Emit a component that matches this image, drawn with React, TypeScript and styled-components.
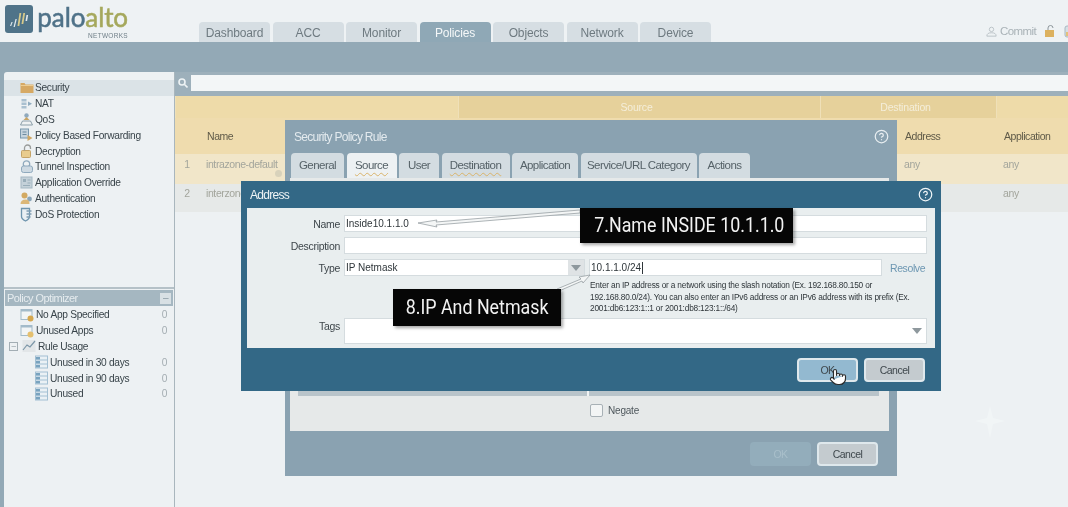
import styled, { createGlobalStyle } from "styled-components";
import { CircleHelp, Pointer } from "lucide-react";

const GlobalStyle = createGlobalStyle`
  html, body {
    margin: 0;
    padding: 0;
    background: #edf1f3;
  }
  body {
    font-family: "Liberation Sans", Arial, sans-serif;
    overflow: hidden;
  }
`;

const Page = styled.div`
  position: relative;
  width: 1068px;
  height: 507px;
  overflow: hidden;
  background: #edf1f3;
  filter: blur(0.35px);
`;

const Header = styled.header`
  display: flex;
  height: 42px;
  background: #eef2f4;
`;

const Logo = styled.div`
  display: flex;
  flex: none;
  gap: 5px;
  width: 199px;
  padding: 5px 0 0 5px;
  box-sizing: border-box;
`;

const LogoWords = styled.div`
  display: flex;
  flex-direction: column;
  align-items: flex-end;
  flex: none;
  width: 90px;
  margin-top: -2px;
`;

const LogoName = styled.div`
  font-family: "Lato", sans-serif;
  font-size: 26px;
  line-height: 29px;
  letter-spacing: -0.1px;
  color: #4f7288;
  -webkit-text-stroke: 0.5px #4f7288;
  span {
    color: #a5a85c;
    -webkit-text-stroke: 0.5px #a5a85c;
  }
`;

const LogoSub = styled.div`
  font-size: 6.5px;
  letter-spacing: 0.3px;
  color: #6f7f88;
`;

const Tabs = styled.nav`
  display: flex;
  gap: 2.5px;
  align-self: flex-end;
`;

const Tab = styled.div<{ $active?: boolean }>`
  width: 71px;
  height: 20px;
  border-radius: 4px 4px 0 0;
  background: ${(p) => (p.$active ? "#8fa8b6" : "#d6dee3")};
  color: ${(p) => (p.$active ? "#f4f7f8" : "#6e7a80")};
  font-size: 12px;
  letter-spacing: -0.15px;
  line-height: 23px;
  text-align: center;
`;

const Tools = styled.div`
  display: flex;
  align-items: center;
  gap: 8px;
  margin: 20px 0 0 auto;
  height: 22px;
  color: #a9b2b7;
  font-size: 11.5px;
  letter-spacing: -0.6px;
  width: 82px;
  flex: none;
  svg {
    flex: none;
  }
`;

const Commit = styled.span`
  display: flex;
  align-items: center;
  gap: 3px;
`;

const Band = styled.div`
  height: 30px;
  background: #93a9b6;
`;

const Body = styled.div`
  display: flex;
  height: 435px;
  padding-left: 4px;
  background: #93a9b6;
`;

const Sidebar = styled.aside`
  display: flex;
  flex-direction: column;
  flex: none;
  width: 171px;
  box-sizing: border-box;
  padding-top: 8px;
  background: #edf1f3;
  border-right: 1px solid #a9b6bd;
  border-radius: 3px 0 0 0;
`;

const NavList = styled.div`
  height: 207px;
  border-bottom: 2px solid #b5c1c7;
`;

const NavRow = styled.div<{ $selected?: boolean }>`
  display: flex;
  align-items: center;
  gap: 1px;
  height: 15.8px;
  padding-left: 15px;
  background: ${(p) => (p.$selected ? "#dbe3e7" : "transparent")};
  color: #39444a;
  font-size: 10.2px;
  letter-spacing: -0.3px;
`;

const OptimizerHead = styled.div`
  display: flex;
  align-items: center;
  justify-content: space-between;
  height: 16px;
  margin: 1px;
  padding: 0 2px;
  background: #a5b7c1;
  color: #e6ecef;
  font-size: 11px;
  letter-spacing: -0.55px;
`;

const Collapse = styled.span`
  width: 11px;
  height: 11px;
  background: #d8e0e4;
  color: #8b9aa3;
  font-size: 10px;
  line-height: 10px;
  text-align: center;
`;

const TreeRow = styled.div<{ $indent: number }>`
  display: flex;
  align-items: center;
  gap: 2px;
  height: 15.8px;
  padding: 0 7px 0 ${(p) => p.$indent}px;
  color: #39444a;
  font-size: 10.2px;
  letter-spacing: -0.3px;
`;

const Count = styled.span`
  margin-left: auto;
  color: #a4adb2;
`;

const TreeToggle = styled.span`
  width: 7px;
  height: 7px;
  margin-right: 2px;
  border: 1px solid #a3aeb4;
  color: #7d8a91;
  font-size: 8px;
  line-height: 6px;
  text-align: center;
`;

const Main = styled.main`
  flex: 1;
  display: flex;
  flex-direction: column;
  min-width: 0;
  background: #edf1f3;
`;

const SearchRow = styled.div`
  display: flex;
  height: 24px;
  box-sizing: border-box;
  padding-top: 3px;
  background: #9db0bb;
`;

const SearchIcon = styled.div`
  width: 16px;
  height: 16px;
  display: flex;
  align-items: center;
  justify-content: center;
`;

const SearchInput = styled.div`
  flex: 1;
  height: 16px;
  background: #f3f6f7;
`;

const GroupRow = styled.div`
  display: grid;
  grid-template-columns: 283px 362px 176px 1fr;
  height: 22px;
  background: #eedba9;
`;

const GroupCell = styled.div<{ $dark?: boolean }>`
  background: ${(p) => (p.$dark ? "#e6d19b" : "transparent")};
  border-left: 1px solid #efe0b8;
  padding-right: 6px;
  color: #f4eeda;
  font-size: 10.5px;
  letter-spacing: -0.2px;
  line-height: 22px;
  text-align: center;
`;

const TableRow = styled.div<{ $bg: string; $height: number }>`
  display: grid;
  grid-template-columns: 24px 96px 602px 99px 1fr;
  height: ${(p) => p.$height}px;
  align-items: center;
  background: ${(p) => p.$bg};
`;

const HeadCell = styled.div`
  padding-left: 8px;
  color: #5f5a48;
  font-size: 10.5px;
  letter-spacing: -0.45px;
`;

const DataCell = styled.div<{ $center?: boolean }>`
  position: relative;
  padding-left: ${(p) => (p.$center ? 0 : 7)}px;
  margin-top: -10px;
  color: #a3a59c;
  font-size: 10.5px;
  letter-spacing: -0.4px;
  text-align: ${(p) => (p.$center ? "center" : "left")};
  white-space: nowrap;
`;

const ClippedName = styled(DataCell)`
  width: 35px;
  overflow: hidden;
`;

const RowBadge = styled.span`
  position: absolute;
  left: 76px;
  top: 12px;
  width: 7px;
  height: 7px;
  border-radius: 50%;
  background: #d8d2bb;
`;

const Window = styled.section<{ $x: number; $y: number; $w: number; $h: number; $bg: string }>`
  position: absolute;
  left: ${(p) => p.$x}px;
  top: ${(p) => p.$y}px;
  width: ${(p) => p.$w}px;
  height: ${(p) => p.$h}px;
  display: flex;
  flex-direction: column;
  background: ${(p) => p.$bg};
`;

const WindowTitle = styled.div<{ $height: number; $color: string }>`
  display: flex;
  align-items: center;
  justify-content: space-between;
  flex: none;
  height: ${(p) => p.$height}px;
  padding: 0 8px 0 9px;
  color: ${(p) => p.$color};
  font-size: 12px;
  letter-spacing: -0.7px;
`;

const RuleTabs = styled.div`
  display: flex;
  gap: 2.5px;
  height: 25px;
  padding-left: 6px;
  flex: none;
`;

const RuleTab = styled.div<{ $w: number; $active?: boolean; $wavy?: boolean }>`
  width: ${(p) => p.$w}px;
  border-radius: 4px 4px 0 0;
  background: ${(p) => (p.$active ? "#edf1f3" : "#d3dce1")};
  color: #566268;
  font-size: 11.5px;
  letter-spacing: -0.55px;
  line-height: 25px;
  text-align: center;
  text-decoration: ${(p) => (p.$wavy ? "underline wavy #d9b36a 1px" : "none")};
  text-underline-offset: 3px;
`;

const RulePanel = styled.div`
  flex: 1;
  display: flex;
  flex-direction: column;
  justify-content: flex-end;
  margin: 0 8px 0 5px;
  padding: 0 10px 0 8px;
  background: #e6e9e9;
`;

const RuleTableEnd = styled.div`
  display: grid;
  grid-template-columns: 289px 1fr;
  gap: 2px;
  height: 6px;
  background: #f1f3f3;
  div {
    background: #b9c4ca;
  }
`;

const NegateRow = styled.label`
  display: flex;
  align-items: center;
  gap: 5px;
  height: 35px;
  box-sizing: border-box;
  padding: 0 0 6px 292px;
  color: #4e575c;
  font-size: 10px;
  letter-spacing: -0.2px;
`;

const CheckBox = styled.span`
  width: 11px;
  height: 11px;
  border: 1px solid #a8b1b6;
  border-radius: 2px;
  background: #f3f5f5;
`;

const WindowFooter = styled.div<{ $height: number; $right: number }>`
  display: flex;
  align-items: center;
  justify-content: flex-end;
  gap: 6px;
  flex: none;
  height: ${(p) => p.$height}px;
  padding-right: ${(p) => p.$right}px;
`;

const Button = styled.div<{ $kind: "ok" | "cancel" | "muted" }>`
  width: 61px;
  height: 24px;
  box-sizing: border-box;
  border: 2px solid ${(p) => (p.$kind === "muted" ? "#93adbb" : "#dfe8ec")};
  border-radius: 4px;
  background: ${(p) =>
    p.$kind === "ok" ? "#93b9d0" : p.$kind === "muted" ? "#93adbb" : "#c4cbcf"};
  color: ${(p) => (p.$kind === "muted" ? "#a9bfca" : "#3f484d")};
  font-size: 10.5px;
  letter-spacing: -0.5px;
  line-height: 20px;
  text-align: center;
`;

const AddressPanel = styled.div`
  display: grid;
  grid-template-columns: 93px 1fr;
  column-gap: 4px;
  row-gap: 5px;
  align-content: start;
  align-items: center;
  flex: none;
  height: 140px;
  box-sizing: border-box;
  margin: 0 6px;
  padding: 7px 8px 0 0;
  background: #e9eeef;
`;

const Label = styled.div`
  color: #3e464b;
  font-size: 10.5px;
  letter-spacing: -0.3px;
  text-align: right;
`;

const TagsLabel = styled(Label)`
  margin-top: -10px;
`;

const Input = styled.div<{ $height?: number }>`
  display: flex;
  align-items: center;
  height: ${(p) => p.$height ?? 17}px;
  box-sizing: border-box;
  padding-left: 1px;
  border: 1px solid #d5dcdf;
  background: #fff;
  color: #2f363a;
  font-size: 10px;
`;

const TypeRow = styled.div`
  display: grid;
  grid-template-columns: 241px 293px 1fr;
  column-gap: 4px;
  align-items: center;
`;

const Arrow = styled.span`
  margin-left: auto;
  width: 0;
  height: 0;
  border-left: 5px solid transparent;
  border-right: 5px solid transparent;
  border-top: 6px solid #8e989d;
`;

const TypeArrowCell = styled.span`
  display: flex;
  align-items: center;
  justify-content: center;
  align-self: stretch;
  width: 16px;
  margin-left: auto;
  background: #dfe3e5;
`;

const TypeArrow = styled(Arrow)`
  margin: 0;
`;

const TagsArrow = styled(Arrow)`
  margin-right: 4px;
`;

const Caret = styled.span`
  width: 1px;
  height: 12px;
  margin-left: 1px;
  background: #2f363a;
`;

const Resolve = styled.span`
  margin-left: 4px;
  color: #6d97b2;
  font-size: 10.5px;
  letter-spacing: -0.4px;
`;

const HelpText = styled.div`
  grid-column: 2;
  margin: -1px 0 -2px 246px;
  color: #2f363a;
  font-size: 8.3px;
  letter-spacing: -0.19px;
  line-height: 11.7px;
  height: 35px;
  white-space: nowrap;
`;

const Callout = styled.div<{ $x: number; $y: number; $w: number; $h: number }>`
  position: absolute;
  left: ${(p) => p.$x}px;
  top: ${(p) => p.$y}px;
  width: ${(p) => p.$w}px;
  height: ${(p) => p.$h}px;
  background: #060606;
  box-shadow: 2px 2px 3px rgba(0, 0, 0, 0.35);
  color: #f2f2f2;
  font-family: "Roboto", sans-serif;
  font-size: 20.5px;
  line-height: ${(p) => p.$h}px;
  text-align: center;
  white-space: nowrap;
`;

const CalloutText = styled.span`
  display: inline-block;
  transform: scaleX(0.87);
`;

const Overlay = styled.svg`
  position: absolute;
  left: 0;
  top: 0;
  pointer-events: none;
`;

const HandCursor = styled.div`
  position: absolute;
  left: 829px;
  top: 368px;
  width: 18px;
  height: 20px;
  color: #2b2b2b;
`;

const navItems = [
  { label: "Security", icon: "folder" },
  { label: "NAT", icon: "nat" },
  { label: "QoS", icon: "qos" },
  { label: "Policy Based Forwarding", icon: "pbf" },
  { label: "Decryption", icon: "lock" },
  { label: "Tunnel Inspection", icon: "tunnel" },
  { label: "Application Override", icon: "app" },
  { label: "Authentication", icon: "auth" },
  { label: "DoS Protection", icon: "dos" },
];

function NavIcon({ kind }: { kind: string }) {
  const parts: Record<string, React.ReactNode> = {
    folder: (
      <>
        <path d="M1 3h4l1 1.5h8V13H1z" fill="#d6a964" />
        <path d="M1 5.5h13" stroke="#eccd94" />
      </>
    ),
    nat: (
      <>
        <rect x="2" y="3" width="5" height="2.5" fill="#a9c0d0" />
        <rect x="2" y="6.5" width="5" height="2.5" fill="#a9c0d0" />
        <rect x="2" y="10" width="5" height="2.5" fill="#a9c0d0" />
        <path d="M8.5 5.5l4 2.3-4 2.3z" fill="#8fabbf" />
      </>
    ),
    qos: (
      <>
        <circle cx="7" cy="3.5" r="2.2" fill="#8fa9bd" />
        <path d="M4 8l3-3 3 3z" fill="#c9a463" />
        <path d="M1 13l2-4h8l2 4z" fill="#eef1f2" stroke="#8b9ea9" />
      </>
    ),
    pbf: (
      <>
        <rect x="1" y="1" width="8" height="9" fill="#c6d4de" stroke="#7b99ae" />
        <path d="M3 4h4M3 6.5h4" stroke="#6d8ba0" />
        <path d="M8 7l5 3-5 3z" fill="#cfa765" />
      </>
    ),
    lock: (
      <>
        <rect x="2" y="6.5" width="9" height="7" rx="1" fill="#e9cc8d" stroke="#c5a468" />
        <path d="M5 6.5V4a3 3 0 0 1 6 0v1" fill="none" stroke="#9a9d9b" strokeWidth="1.3" />
      </>
    ),
    tunnel: (
      <>
        <circle cx="7" cy="5" r="3.2" fill="none" stroke="#8fa9bd" strokeWidth="1.3" />
        <rect x="2" y="7" width="11" height="6.5" rx="2" fill="#cdd9e2" stroke="#8fa9bd" />
      </>
    ),
    app: (
      <>
        <rect x="1.5" y="2" width="11" height="11" fill="#c4d1d9" stroke="#a5b8c3" />
        <rect x="3.5" y="4" width="3" height="3" fill="#98adb9" />
        <path d="M8 5h3M8 8h3M3.5 10.5h7" stroke="#98adb9" />
      </>
    ),
    auth: (
      <>
        <circle cx="5" cy="4.5" r="3" fill="#d3aa62" />
        <circle cx="10" cy="8" r="2.4" fill="#8ba7bb" />
        <path d="M1 13c0-3 2-4.5 5-4.5s4 1.5 4 4.5z" fill="#dbb778" />
      </>
    ),
    dos: (
      <>
        <path d="M2 1.5h8v8c0 2-2 3.5-4 4.5-2-1-4-2.5-4-4.5z" fill="#e9eff3" stroke="#6f95ae" strokeWidth="1.3" />
        <path d="M7 4h5M7 7h5M7 10h4" stroke="#7f9db3" strokeWidth="1.4" />
      </>
    ),
  };
  return (
    <svg width="15" height="15" viewBox="0 0 14 15">
      {parts[kind]}
    </svg>
  );
}

function WindowIcon({ dot }: { dot: string }) {
  return (
    <svg width="14" height="14" viewBox="0 0 14 14">
      <rect x="1" y="1.5" width="11" height="10" fill="#f2f5f6" stroke="#a3bbca" />
      <rect x="1" y="1.5" width="11" height="2" fill="#a3bbca" />
      <circle cx="10.5" cy="10.5" r="3" fill={dot} />
    </svg>
  );
}

function RuleIcon() {
  return (
    <svg width="13" height="14" viewBox="0 0 13 14">
      <rect x="0.5" y="1" width="12" height="12" fill="#eaf1f5" stroke="#a3c0d3" />
      <path d="M0.5 5h12M0.5 9h12" stroke="#a3c0d3" />
      <rect x="1" y="2" width="4" height="2.5" fill="#79a3bf" />
      <rect x="1" y="6" width="4" height="2.5" fill="#79a3bf" />
      <rect x="1" y="10" width="4" height="2.5" fill="#79a3bf" />
    </svg>
  );
}

function App() {
  return (
    <Page>
      <GlobalStyle />
      <Header>
        <Logo>
          <svg width="28" height="28" viewBox="0 0 28 28">
            <rect width="28" height="28" rx="3" fill="#4f7389" />
            <path d="M5 21l1.5-4h1.200L6.200 21zM8.500 22l2-8h1.300l-2 8z" fill="#dfe8ec" />
            <path d="M12.500 21l2-13h1.800l-2 13zM16.500 19l1.800-11h1.800l-1.800 11z" fill="#d6c98a" />
            <path d="M20.500 16l1-6h1.600l-1 6z" fill="#e6ebee" />
          </svg>
          <LogoWords>
            <LogoName>
              palo<span>alto</span>
            </LogoName>
            <LogoSub>NETWORKS</LogoSub>
          </LogoWords>
        </Logo>
        <Tabs>
          <Tab>Dashboard</Tab>
          <Tab>ACC</Tab>
          <Tab>Monitor</Tab>
          <Tab $active>Policies</Tab>
          <Tab>Objects</Tab>
          <Tab>Network</Tab>
          <Tab>Device</Tab>
        </Tabs>
        <Tools>
          <Commit>
            <svg width="11" height="13" viewBox="0 0 13 13" fill="none" stroke="#b4bcc1">
              <circle cx="6.5" cy="4" r="2.6" />
              <path d="M1 12c0-3 2-4 5.5-4s5.500 1 5.500 4z" />
            </svg>
            Commit
          </Commit>
          <svg width="12" height="13" viewBox="0 0 12 13">
            <rect x="1" y="5" width="9" height="7" fill="#dcb15f" />
            <path d="M4 5V3a2.5 2.5 0 0 1 5 0" fill="none" stroke="#8d969b" />
          </svg>
          <svg width="12" height="13" viewBox="0 0 12 13">
            <rect x="1" y="1" width="10" height="11" rx="2" fill="#d6e0e6" stroke="#a8b8c2" />
            <rect x="2" y="7" width="8" height="4" fill="#e2c27c" />
          </svg>
        </Tools>
      </Header>
      <Band />
      <Body>
        <Sidebar>
          <NavList>
            {navItems.map((item, i) => (
              <NavRow key={item.label} $selected={i === 0}>
                <NavIcon kind={item.icon} />
                {item.label}
              </NavRow>
            ))}
          </NavList>
          <OptimizerHead>
            Policy Optimizer
            <Collapse>–</Collapse>
          </OptimizerHead>
          <TreeRow $indent={16}>
            <WindowIcon dot="#d6a84f" />
            No App Specified
            <Count>0</Count>
          </TreeRow>
          <TreeRow $indent={16}>
            <WindowIcon dot="#e5c06f" />
            Unused Apps
            <Count>0</Count>
          </TreeRow>
          <TreeRow $indent={5}>
            <TreeToggle>–</TreeToggle>
            <svg width="14" height="14" viewBox="0 0 14 14">
              <rect x="0.5" y="1" width="13" height="12" fill="#e2e6e8" />
              <path d="M1 11l4-5 3 2 5-6" fill="none" stroke="#7c97a8" strokeWidth="1.2" />
            </svg>
            Rule Usage
          </TreeRow>
          <TreeRow $indent={31}>
            <RuleIcon />
            Unused in 30 days
            <Count>0</Count>
          </TreeRow>
          <TreeRow $indent={31}>
            <RuleIcon />
            Unused in 90 days
            <Count>0</Count>
          </TreeRow>
          <TreeRow $indent={31}>
            <RuleIcon />
            Unused
            <Count>0</Count>
          </TreeRow>
        </Sidebar>
        <Main>
          <SearchRow>
            <SearchIcon>
              <svg width="10" height="10" viewBox="0 0 10 10" fill="none" stroke="#eef3f5" strokeWidth="1.6">
                <circle cx="4" cy="4" r="3" />
                <path d="M6.5 6.5L9.5 9.5" />
              </svg>
            </SearchIcon>
            <SearchInput />
          </SearchRow>
          <GroupRow>
            <GroupCell />
            <GroupCell $dark>Source</GroupCell>
            <GroupCell $dark>Destination</GroupCell>
            <GroupCell />
          </GroupRow>
          <TableRow $bg="#efdcae" $height={36}>
            <HeadCell />
            <HeadCell>Name</HeadCell>
            <HeadCell />
            <HeadCell>Address</HeadCell>
            <HeadCell>Application</HeadCell>
          </TableRow>
          <TableRow $bg="#f1e6c9" $height={30}>
            <DataCell $center>1</DataCell>
            <DataCell>
              intrazone-default
              <RowBadge />
            </DataCell>
            <DataCell />
            <DataCell>any</DataCell>
            <DataCell>any</DataCell>
          </TableRow>
          <TableRow $bg="#e6e9e8" $height={28}>
            <DataCell $center>2</DataCell>
            <ClippedName>interzone-default</ClippedName>
            <DataCell />
            <DataCell>any</DataCell>
            <DataCell>any</DataCell>
          </TableRow>
        </Main>
      </Body>

      <Window $x={285} $y={120} $w={612} $h={356} $bg="#8aa2b1">
        <WindowTitle $height={33} $color="#e3eaee">
          Security Policy Rule
          <CircleHelp size={15} color="#e8eef1" />
        </WindowTitle>
        <RuleTabs>
          <RuleTab $w={53}>General</RuleTab>
          <RuleTab $w={50} $active $wavy>Source</RuleTab>
          <RuleTab $w={40}>User</RuleTab>
          <RuleTab $w={68} $wavy>Destination</RuleTab>
          <RuleTab $w={66}>Application</RuleTab>
          <RuleTab $w={116}>Service/URL Category</RuleTab>
          <RuleTab $w={51}>Actions</RuleTab>
        </RuleTabs>
        <RulePanel>
          <RuleTableEnd>
            <div />
            <div />
          </RuleTableEnd>
          <NegateRow>
            <CheckBox />
            Negate
          </NegateRow>
        </RulePanel>
        <WindowFooter $height={45} $right={19}>
          <Button $kind="muted">OK</Button>
          <Button $kind="cancel">Cancel</Button>
        </WindowFooter>
      </Window>

      <Window $x={241} $y={181} $w={700} $h={210} $bg="#336886">
        <WindowTitle $height={27} $color="#eef3f5">
          Address
          <CircleHelp size={15} color="#f0f5f7" />
        </WindowTitle>
        <AddressPanel>
          <Label>Name</Label>
          <Input>Inside10.1.1.0</Input>
          <Label>Description</Label>
          <Input />
          <Label>Type</Label>
          <TypeRow>
            <Input>
              IP Netmask
              <TypeArrowCell>
                <TypeArrow />
              </TypeArrowCell>
            </Input>
            <Input>
              10.1.1.0/24
              <Caret />
            </Input>
            <Resolve>Resolve</Resolve>
          </TypeRow>
          <HelpText>
            Enter an IP address or a network using the slash notation (Ex. 192.168.80.150 or
            <br />
            192.168.80.0/24). You can also enter an IPv6 address or an IPv6 address with its prefix (Ex.
            <br />
            2001:db6:123:1::1 or 2001:db8:123:1::/64)
          </HelpText>
          <TagsLabel>Tags</TagsLabel>
          <Input $height={26}>
            <TagsArrow />
          </Input>
        </AddressPanel>
        <WindowFooter $height={43} $right={16}>
          <Button $kind="ok">OK</Button>
          <Button $kind="cancel">Cancel</Button>
        </WindowFooter>
      </Window>

      <Overlay width="1068" height="507" viewBox="0 0 1068 507">
        <path d="M580 210L436 222L437 220L418 223L437 227L436 225L580 213z" fill="#f4f6f6" stroke="#8d9599" strokeWidth="0.7" />
        <path d="M557 289L581 279L579 277L590 275L583 283L582 281L559 291z" fill="#f4f6f6" stroke="#8d9599" strokeWidth="0.7" />
        <path d="M990 406l3 12 12 3-12 3-3 14-3-14-12-3 12-3z" fill="#f1f5f6" />
      </Overlay>
      <Callout $x={580} $y={208} $w={213} $h={35}>
        <CalloutText>7.Name INSIDE 10.1.1.0</CalloutText>
      </Callout>
      <Callout $x={393} $y={289} $w={168} $h={37}>
        <CalloutText>8.IP And Netmask</CalloutText>
      </Callout>
      <HandCursor>
        <Pointer size={18} fill="#fff" strokeWidth={1.5} />
      </HandCursor>
    </Page>
  );
}

export default App;
